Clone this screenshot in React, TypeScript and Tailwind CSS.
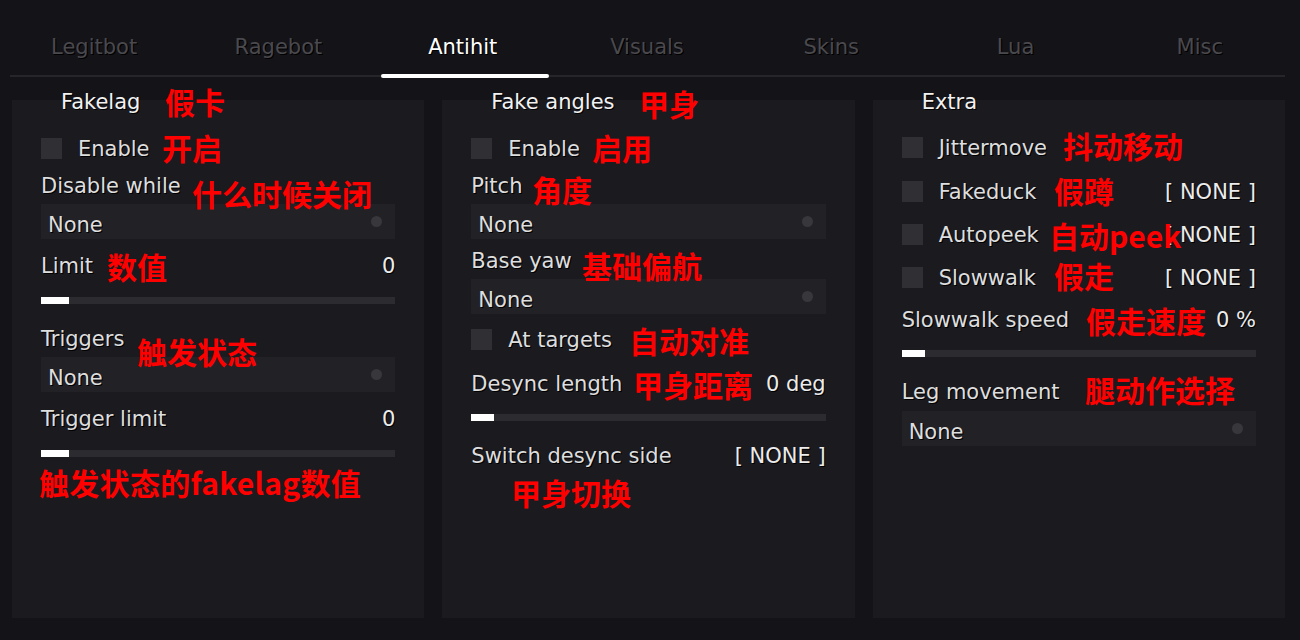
import React from 'react';

const tabs = ['Legitbot', 'Ragebot', 'Antihit', 'Visuals', 'Skins', 'Lua', 'Misc'];

const Title = ({ text }: { text: string }) => (
  <div className="-mt-[10px] ml-[20px] h-[24px] leading-[24px] text-[#f2f2f2]">{text}</div>
);

const Check = ({ label, value, className = '' }: { label: string; value?: string; className?: string }) => (
  <div className={`flex items-center h-[21px] ${className}`}>
    <div className="w-[21px] h-[21px] bg-[#302f34]" />
    <span className="ml-[16px] leading-[24px]">{label}</span>
    {value && <span className="ml-auto leading-[24px] text-[#ececec]">{value}</span>}
  </div>
);

const Label = ({ text, value, className = '' }: { text: string; value?: string; className?: string }) => (
  <div className={`flex justify-between h-[24px] leading-[24px] ${className}`}>
    <span>{text}</span>
    {value && <span className="text-[#ececec]">{value}</span>}
  </div>
);

const Select = ({ className = '' }: { className?: string }) => (
  <div className={`h-[35px] bg-[#222126] flex items-center justify-between pl-[7px] pr-[13px] ${className}`}>
    <span className="pt-[6px] leading-[24px]">None</span>
    <span className="w-[11px] h-[11px] rounded-full bg-[#38373c]" />
  </div>
);

const Slider = ({ fill, className = '' }: { fill: string; className?: string }) => (
  <div className={`h-[7px] bg-[#2c2b30] ${className}`}>
    <div className={`h-full bg-white ${fill}`} />
  </div>
);

const notes = [
  { t: '假卡', c: 'left-[165px] top-[86px]' },
  { t: '开启', c: 'left-[162px] top-[132px]' },
  { t: '什么时候关闭', c: 'left-[192px] top-[178px]' },
  { t: '数值', c: 'left-[107px] top-[251px]' },
  { t: '触发状态', c: 'left-[137px] top-[336px]' },
  { t: '触发状态的fakelag数值', c: 'left-[39px] top-[467px] tracking-[0.3px]' },
  { t: '甲身', c: 'left-[639px] top-[88px]' },
  { t: '启用', c: 'left-[592px] top-[132px]' },
  { t: '角度', c: 'left-[532px] top-[174px]' },
  { t: '基础偏航', c: 'left-[582px] top-[250px]' },
  { t: '自动对准', c: 'left-[629px] top-[325px]' },
  { t: '甲身距离', c: 'left-[633px] top-[369px]' },
  { t: '甲身切换', c: 'left-[511px] top-[477px]' },
  { t: '抖动移动', c: 'left-[1063px] top-[130px]' },
  { t: '假蹲', c: 'left-[1054px] top-[175px]' },
  { t: '自动peek', c: 'left-[1049px] top-[220px]' },
  { t: '假走', c: 'left-[1054px] top-[260px]' },
  { t: '假走速度', c: 'left-[1086px] top-[305px]' },
  { t: '腿动作选择', c: 'left-[1085px] top-[374px]' },
];

export default function App() {
  return (
    <div className="relative w-[1300px] h-[640px] overflow-hidden bg-[#141317] font-['DejaVu_Sans',sans-serif] text-[21px] text-[#dedede] [text-shadow:1px_1px_0_#000]">
      {/* tab bar */}
      <div className="flex ml-[2px] w-[1290px] pt-[35px]">
        {tabs.map((t) => (
          <div
            key={t}
            className={`relative w-[184.3px] text-center leading-[24px] ${t === 'Antihit' ? 'text-white' : 'text-[#4a494e]'}`}
          >
            {t}
            {t === 'Antihit' && (
              <div className="absolute left-[10px] top-[39px] w-[168px] h-[4px] rounded-full bg-white" />
            )}
          </div>
        ))}
      </div>
      <div className="mt-[16px] ml-[10px] mr-[15px] h-[2px] bg-[#26252a]" />

      {/* panels */}
      <div className="grid grid-cols-3 gap-[18px] ml-[12px] mr-[15px] mt-[23px] h-[518px]">
        <div className="flex flex-col bg-[#1b1a1f] px-[29px]">
          <Title text="Fakelag" />
          <Check label="Enable" className="mt-[24px]" />
          <Label text="Disable while" className="mt-[15px]" />
          <Select className="mt-[6px]" />
          <Label text="Limit" value="0" className="mt-[15px]" />
          <Slider fill="w-[28px]" className="mt-[19px]" />
          <Label text="Triggers" className="mt-[23px]" />
          <Select className="mt-[6px]" />
          <Label text="Trigger limit" value="0" className="mt-[15px]" />
          <Slider fill="w-[28px]" className="mt-[19px]" />
        </div>

        <div className="flex flex-col bg-[#1b1a1f] px-[29px]">
          <Title text="Fake angles" />
          <Check label="Enable" className="mt-[24px]" />
          <Label text="Pitch" className="mt-[15px]" />
          <Select className="mt-[6px]" />
          <Label text="Base yaw" className="mt-[10px]" />
          <Select className="mt-[6px]" />
          <Check label="At targets" className="mt-[15px]" />
          <Label text="Desync length" value="0 deg" className="mt-[22px]" />
          <Slider fill="w-[23px]" className="mt-[18px]" />
          <Label text="Switch desync side" value="[ NONE ]" className="mt-[23px]" />
        </div>

        <div className="flex flex-col bg-[#1b1a1f] px-[29px]">
          <Title text="Extra" />
          <Check label="Jittermove" className="mt-[23px]" />
          <Check label="Fakeduck" value="[ NONE ]" className="mt-[23px]" />
          <Check label="Autopeek" value="[ NONE ]" className="mt-[22px]" />
          <Check label="Slowwalk" value="[ NONE ]" className="mt-[22px]" />
          <Label text="Slowwalk speed" value="0 %" className="mt-[20px]" />
          <Slider fill="w-[23px]" className="mt-[18px]" />
          <Label text="Leg movement" className="mt-[23px]" />
          <Select className="mt-[7px]" />
        </div>
      </div>

      {/* red annotations drawn over the menu */}
      {notes.map((n) => (
        <div
          key={n.t}
          className={`absolute whitespace-nowrap text-[30px] leading-none font-bold text-[#ff0000] [text-shadow:none] font-['Noto_Sans_CJK_SC',sans-serif] ${n.c}`}
        >
          {n.t}
        </div>
      ))}
    </div>
  );
}
